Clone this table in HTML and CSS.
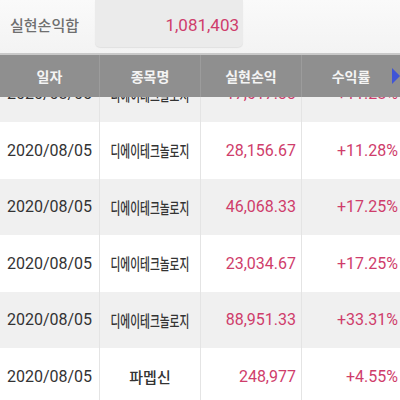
FILE: index.html
```html
<!DOCTYPE html>
<html lang="ko">
<head>
<meta charset="utf-8">
<link rel="stylesheet" href="styles.css">
</head>
<body>
<div class="summary">
  <div class="summary-label">실현손익합</div>
  <div class="summary-box">1,081,403</div>
</div>
<div class="table">
  <div class="thead">
    <div class="th">일자</div>
    <div class="th">종목명</div>
    <div class="th">실현손익</div>
    <div class="th">수익률<span class="more"></span></div>
  </div>
  <div class="tbody">
    <div class="row alt partial">
      <div class="td date">2020/08/05</div>
      <div class="td name"><span class="squeeze">디에이테크놀로지</span></div>
      <div class="td num">17,617.33</div>
      <div class="td pct">+11.28%</div>
    </div>
    <div class="row">
      <div class="td date">2020/08/05</div>
      <div class="td name"><span class="squeeze">디에이테크놀로지</span></div>
      <div class="td num">28,156.67</div>
      <div class="td pct">+11.28%</div>
    </div>
    <div class="row alt">
      <div class="td date">2020/08/05</div>
      <div class="td name"><span class="squeeze">디에이테크놀로지</span></div>
      <div class="td num">46,068.33</div>
      <div class="td pct">+17.25%</div>
    </div>
    <div class="row">
      <div class="td date">2020/08/05</div>
      <div class="td name"><span class="squeeze">디에이테크놀로지</span></div>
      <div class="td num">23,034.67</div>
      <div class="td pct">+17.25%</div>
    </div>
    <div class="row alt">
      <div class="td date">2020/08/05</div>
      <div class="td name"><span class="squeeze">디에이테크놀로지</span></div>
      <div class="td num">88,951.33</div>
      <div class="td pct">+33.31%</div>
    </div>
    <div class="row">
      <div class="td date">2020/08/05</div>
      <div class="td name">파멥신</div>
      <div class="td num">248,977</div>
      <div class="td pct">+4.55%</div>
    </div>
  </div>
</div>
</body>
</html>
```

FILE: styles.css
```css
html, body {
  margin: 0;
  padding: 0;
}
body {
  width: 400px;
  height: 400px;
  overflow: hidden;
  background: #ffffff;
  font-family: Roboto, "Noto Sans CJK KR", sans-serif;
}
.summary {
  height: 53px;
  display: flex;
  align-items: flex-start;
  background: linear-gradient(#fafafa, #f3f3f3);
  border-bottom: 2px solid #c9c9c9;
}
.summary-label {
  width: 95px;
  padding-left: 10px;
  box-sizing: border-box;
  line-height: 50px;
  font-family: "Noto Sans CJK KR", sans-serif;
  font-weight: 500;
  font-size: 15px;
  color: #6f6f6f;
}
.summary-box {
  width: 148px;
  height: 47px;
  box-sizing: border-box;
  padding-right: 4px;
  text-align: right;
  line-height: 50px;
  background: #ebebeb;
  border-radius: 0 0 5px 5px;
  box-shadow: 0 1px 1px rgba(0, 0, 0, 0.08);
  font-size: 17px;
  color: #cf3d6b;
}
.table {
  width: 400px;
}
.thead {
  height: 42px;
  display: grid;
  grid-template-columns: 100px 101px 101px 98px;
  background: #8f8f8f;
}
.th {
  position: relative;
  font-family: "Noto Sans CJK KR", sans-serif;
  font-weight: 700;
  font-size: 14px;
  line-height: 42px;
  color: #f4f4f4;
  text-align: center;
  border-right: 1px solid rgba(255, 255, 255, 0.12);
}
.th:last-child {
  border-right: none;
}
.more {
  position: absolute;
  right: 0;
  top: 13px;
  width: 0;
  height: 0;
  border-top: 8px solid transparent;
  border-bottom: 8px solid transparent;
  border-left: 8px solid #3f55d6;
}
.row {
  height: 56.5px;
  display: grid;
  grid-template-columns: 100px 101px 101px 98px;
  background: #ffffff;
}
.row.alt {
  background: #f0f0f0;
}
.row.partial {
  height: 25px;
  overflow: hidden;
}
.row.partial .td {
  height: 56.5px;
  margin-top: -31.5px;
}
.td {
  display: flex;
  align-items: center;
  border-right: 1px solid #e4e4e4;
  font-size: 16px;
  white-space: nowrap;
  overflow: hidden;
}
.td:last-child {
  border-right: none;
}
.date {
  justify-content: center;
  color: #333333;
}
.name {
  justify-content: center;
  font-family: "Noto Sans CJK KR", sans-serif;
  font-weight: 500;
  font-size: 15px;
  color: #333333;
}
.squeeze {
  display: inline-block;
  font-size: 16px;
  transform: scaleX(0.67);
  transform-origin: center;
}
.num {
  justify-content: flex-end;
  padding-right: 5px;
  color: #cf3d6b;
}
.pct {
  justify-content: flex-end;
  padding-right: 2px;
  color: #cf3d6b;
}
```
